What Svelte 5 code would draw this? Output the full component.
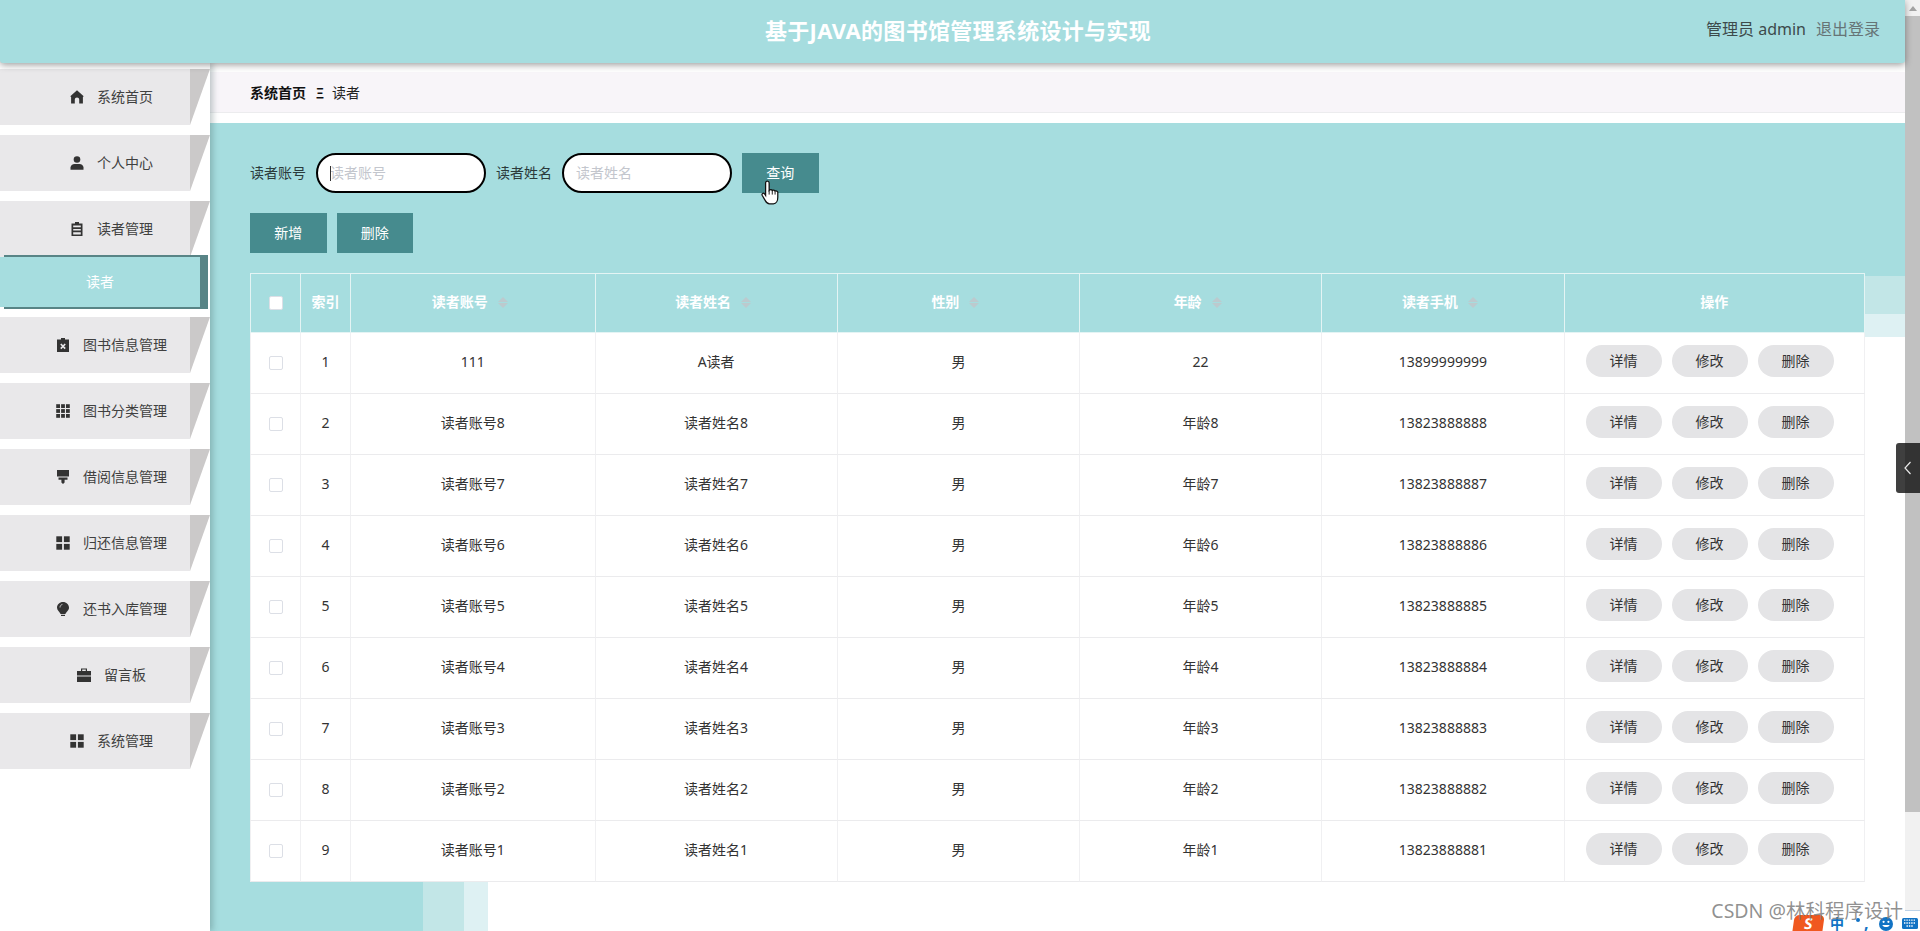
<script>
  const menu = [
    { label: '系统首页', icon: 'home' },
    { label: '个人中心', icon: 'user' },
    { label: '读者管理', icon: 'clip', sub: '读者' },
    { label: '图书信息管理', icon: 'clipx' },
    { label: '图书分类管理', icon: 'grid3' },
    { label: '借阅信息管理', icon: 'brush' },
    { label: '归还信息管理', icon: 'grid2' },
    { label: '还书入库管理', icon: 'bulb' },
    { label: '留言板', icon: 'case' },
    { label: '系统管理', icon: 'grid2' }
  ];
  const cols = ['读者账号', '读者姓名', '性别', '年龄', '读者手机'];
  const rows = [
    ['111', 'A读者', '男', '22', '13899999999'],
    ...[8, 7, 6, 5, 4, 3, 2, 1].map((n) => [
      '读者账号' + n,
      '读者姓名' + n,
      '男',
      '年龄' + n,
      '1382388888' + n
    ])
  ];
  const grid3 = [0, 1, 2].flatMap((y) => [0, 1, 2].map((x) => [x * 4.9 + 0.2, y * 4.9 + 0.2]));
</script>

<div class="page">
  <div class="viewport">
    <header class="top">
      <div class="title">基于JAVA的图书馆管理系统设计与实现</div>
      <div class="user"><span class="who">管理员 admin</span><span class="out">退出登录</span></div>
    </header>
    <div class="body">
      <nav class="side">
        {#each menu as m}
          <div class="item" class:open={m.sub}>
            <svg class="ic" viewBox="0 0 14 14" aria-hidden="true">
              {#if m.icon === 'home'}
                <path d="M7 .3 13.7 6.2 12.9 7V13.6H9.2V9.6A2.2 2.2 0 0 0 4.8 9.6V13.6H1.1V7L.3 6.2Z" />
              {:else if m.icon === 'user'}
                <circle cx="7" cy="3.5" r="3.3" />
                <path d="M.5 13.7V11.6C.5 9.6 2.5 8 4.5 8H9.5C11.5 8 13.5 9.6 13.5 11.6V13.7Z" />
              {:else if m.icon === 'clip'}
                <path fill-rule="evenodd" d="M5 0H9V1.5H12.5V14H1.5V1.5H5ZM3.2 3.6V5.3H10.8V3.6ZM3.2 7V8.4H10.8V7ZM3.2 10.2V12.4H10.8V10.2Z" />
              {:else if m.icon === 'clipx'}
                <path d="M5 0H9V1.5H13V14H1V1.5H5Z" />
                <path class="cut" d="M4.8 6 9.2 10.6M9.2 6 4.8 10.6" />
              {:else if m.icon === 'grid3'}
                {#each grid3 as g}
                  <rect x={g[0]} y={g[1]} width="3.8" height="3.8" />
                {/each}
              {:else if m.icon === 'grid2'}
                <rect x=".3" y=".3" width="5.8" height="5.8" />
                <rect x="7.9" y=".3" width="5.8" height="5.8" />
                <rect x=".3" y="7.9" width="5.8" height="5.8" />
                <rect x="7.9" y="7.9" width="5.8" height="5.8" />
              {:else if m.icon === 'brush'}
                <path d="M1 0H13V6.6H1ZM2.5 7.6H11.5V9.8H8.6V12.6L7 14 5.4 12.6V9.8H2.5Z" />
              {:else if m.icon === 'bulb'}
                <path d="M7 0C3.6 0 1 2.5 1 5.7 1 8.4 3.7 9.6 4.6 12H9.4C10.3 9.6 13 8.4 13 5.7 13 2.5 10.4 0 7 0Z" />
                <path d="M5 12.8H9V14H5Z" />
                <path class="cut thin" d="M4 5.5C4 3.8 5.2 2.6 6.4 2.4" />
              {:else if m.icon === 'case'}
                <path d="M4 3V.4H10V3H8.8V1.6H5.2V3ZM0 3H14V7.6H0ZM0 8.6H14V14H0Z" />
              {/if}
            </svg>
            <span>{m.label}</span>
          </div>
          {#if m.sub}
            <div class="sub">{m.sub}</div>
          {/if}
        {/each}
      </nav>
      <main class="main">
        <div class="crumb">
          <b>系统首页</b><i class="sep">三</i><span>读者</span>
        </div>
        <section class="content">
          <div class="search">
            <label>读者账号<span class="field"><input placeholder="读者账号" /><span class="caret"></span></span></label>
            <label>读者姓名<input placeholder="读者姓名" /></label>
            <button class="act query">
              查询
              <svg class="hand" viewBox="0 0 18 24" aria-hidden="true">
                <path d="M6 1C7 1 7.7 1.8 7.7 2.8V9.9C8.3 9.2 10.2 9 10.7 10.1 11.3 9.5 13 9.6 13.4 10.6 14.2 10.2 15.9 10.6 16 11.8V16.5C16 19.5 14.6 22.8 11.8 22.8H8C6 22.8 5 21.8 4 19.8L1 14.6C.3 13.2 2.2 12 3.2 13.2L4.3 14.8V2.8C4.3 1.8 5 1 6 1Z" />
                <path class="fingers" d="M7.7 10V14M10.7 10.2V14M13.4 10.7V14" />
              </svg>
            </button>
          </div>
          <div class="actions">
            <button class="act">新增</button>
            <button class="act">删除</button>
          </div>
          <table>
            <colgroup>
              <col class="c-first" /><col class="c-index" /><col class="c-account" />
              <col /><col /><col /><col />
              <col class="c-ops" />
            </colgroup>
            <thead>
              <tr>
                <th><span class="check on"></span></th>
                <th>索引</th>
                {#each cols as c}
                  <th><span class="sortable">{c}<span class="sort"><em class="up"></em><em class="down"></em></span></span></th>
                {/each}
                <th>操作</th>
              </tr>
            </thead>
            <tbody>
              {#each rows as r, i}
                <tr>
                  <td><span class="check"></span></td>
                  <td>{i + 1}</td>
                  {#each r as v}
                    <td>{v}</td>
                  {/each}
                  <td>
                    <div class="btns">
                      <button>详情</button><button>修改</button><button>删除</button>
                    </div>
                  </td>
                </tr>
              {/each}
            </tbody>
          </table>
        </section>
      </main>
    </div>
  </div>
  <aside class="scroll">
    <div class="arrow"><span></span></div>
    <div class="thumb"></div>
    <div class="track"></div>
  </aside>

  <div class="tab">
    <svg viewBox="0 0 8 14" aria-hidden="true"><path d="M6.5 1 1 7l5.5 6" /></svg>
  </div>

  <div class="ime">
    <div class="logo"><span>S</span></div>
    <b class="zh">中</b>
    <i class="dot"></i>
    <b class="comma">,</b>
    <svg class="smile" viewBox="0 0 14 14" aria-hidden="true">
      <circle cx="7" cy="7" r="7" />
      <circle class="eye" cx="4.6" cy="4.8" r="1.1" />
      <circle class="eye" cx="9.4" cy="4.8" r="1.1" />
      <path class="mouth" d="M3.4 8C4 10.8 10 10.8 10.6 8Z" />
    </svg>
    <svg class="kbd" viewBox="0 0 16 11" aria-hidden="true">
      <rect width="16" height="11" rx="1.5" />
      <path class="keys" d="M2 2.2H14M2 5H14M4.5 8H11.5" stroke-dasharray="1.4 1" />
    </svg>
  </div>
  <div class="mark">CSDN @林科程序设计</div>
</div>

<style>
  :global(body) {
    margin: 0;
    background: #fff;
    overflow: hidden;
    font-family: "Noto Sans", "Noto Sans CJK SC", sans-serif;
  }
  .page {
    --teal: #a6dddf;
    --deep: #468b8e;
    position: relative;
    display: flex;
    width: 1920px;
    height: 931px;
    overflow: hidden;
    color: #333;
    font-size: 14px;
    line-height: 20px;
  }
  .viewport {
    display: flex;
    flex-direction: column;
    width: 1905px;
    height: 100%;
  }

  .top {
    position: relative;
    z-index: 3;
    flex: none;
    display: grid;
    grid-template-columns: 1fr auto 1fr;
    align-items: center;
    height: 63px;
    padding: 0 25px 0 36px;
    background: var(--teal);
    border-radius: 0 0 3px 3px;
    box-shadow: 0 2px 7px rgba(0, 0, 0, 0.38);
  }
  .title {
    grid-column: 2;
    margin-bottom: 4px;
    color: #fff;
    font-size: 22px;
    font-weight: 700;
    line-height: 30px;
    letter-spacing: 0.3px;
  }
  .user {
    grid-column: 3;
    justify-self: end;
    display: flex;
    gap: 10px;
    margin-bottom: 5px;
    font-size: 16px;
    line-height: 24px;
  }
  .who { color: #3d4a4b; }
  .out { color: #667476; }

  .body {
    flex: 1;
    display: flex;
    min-height: 0;
  }
  .side {
    position: relative;
    z-index: 2;
    flex: none;
    width: 210px;
    padding-top: 6px;
    box-sizing: border-box;
    background: #fff;
    box-shadow: 3px 0 6px rgba(60, 90, 90, 0.3);
  }
  .item {
    position: relative;
    display: flex;
    align-items: center;
    justify-content: center;
    gap: 13px;
    box-sizing: border-box;
    width: 190px;
    height: 56px;
    margin-bottom: 10px;
    padding-left: 33px;
    background: #e9e8ea;
    color: #404040;
  }
  .item::after {
    content: "";
    position: absolute;
    left: 100%;
    top: 0;
    width: 20px;
    height: 56px;
    background: #cbc9c9;
    clip-path: polygon(0 0, 100% 0, 0 100%);
  }
  .item.open { margin-bottom: 0; }
  .ic {
    flex: none;
    width: 14px;
    height: 14px;
    fill: #333;
  }
  .cut {
    fill: none;
    stroke: #e9e8ea;
    stroke-width: 1.6;
  }
  .cut.thin { stroke-width: 0.8; }
  .sub {
    position: relative;
    width: 200px;
    height: 50px;
    margin-bottom: 10px;
    background: var(--teal);
    box-shadow: 6px 0 0 2px #588486;
    color: #fff;
    text-align: center;
    line-height: 50px;
  }

  .main {
    flex: 1;
    min-width: 0;
    display: flex;
    flex-direction: column;
  }
  .crumb {
    flex: none;
    display: flex;
    align-items: center;
    box-sizing: border-box;
    height: 41px;
    margin: 9px 0 10px;
    padding: 2px 0 0 40px;
    background: #f8f5f9;
    border-bottom: 1px solid #ececee;
    color: #222;
  }
  .crumb b { font-weight: 700; color: #111; }
  .sep {
    width: 10px;
    margin: 0 7px 0 9px;
    font-style: normal;
    font-size: 10px;
    font-weight: 700;
    color: #111;
    transform: scale(0.8, 1.2);
  }
  .content {
    flex: 1;
    box-sizing: border-box;
    padding: 30px 40px 0;
    background-color: #fff;
    background-image:
      linear-gradient(var(--teal), var(--teal)),
      linear-gradient(var(--teal), var(--teal)),
      linear-gradient(#c2e6e7, #c2e6e7),
      linear-gradient(#c2e6e7, #c2e6e7),
      linear-gradient(#def1f3, #def1f3),
      linear-gradient(#def1f3, #def1f3);
    background-repeat: no-repeat;
    background-size:
      100% 153px,
      213px 100%,
      254px 100%,
      100% 191px,
      278px 100%,
      100% 214px;
  }
  .search {
    display: flex;
    gap: 10px;
    height: 40px;
    margin-bottom: 20px;
  }
  label {
    display: flex;
    align-items: center;
    gap: 10px;
    color: #2b3a3b;
  }
  .field {
    position: relative;
    display: block;
  }
  input {
    display: block;
    box-sizing: border-box;
    width: 170px;
    height: 40px;
    padding: 0 12px 2px;
    border: 2px solid #000;
    border-radius: 20px;
    background: #fff;
    outline: none;
    font: inherit;
    color: #333;
  }
  input::placeholder { color: #c3c6cd; }
  .caret {
    position: absolute;
    left: 14px;
    top: 13px;
    width: 1px;
    height: 15px;
    background: #333;
  }
  .act {
    position: relative;
    width: 76.5px;
    height: 40px;
    padding: 0;
    border: 0;
    background: var(--deep);
    color: #fff;
    font: inherit;
  }
  .hand {
    position: absolute;
    left: 19px;
    top: 27px;
    width: 19px;
    height: 25px;
    fill: #fff;
    stroke: #111;
    stroke-width: 1.2;
  }
  .fingers { fill: none; stroke-width: 0.9; }
  .actions {
    display: flex;
    gap: 10px;
    height: 40px;
    margin-bottom: 20px;
  }

  table {
    width: 1615px;
    table-layout: fixed;
    border-spacing: 0;
    border-collapse: separate;
    background: #fff;
  }
  .c-first { width: 51px; }
  .c-index { width: 50px; }
  .c-account { width: 244.5px; }
  .c-ops { width: 300.5px; }
  th, td {
    box-sizing: border-box;
    padding: 0 0 2px;
    text-align: center;
  }
  th {
    height: 60px;
    background: var(--teal);
    border-top: 1px solid #e4f4f4;
    border-right: 1px solid #e4f4f4;
    border-bottom: 1px solid #e4f4f4;
    color: #fff;
    font-weight: 700;
  }
  th:first-child { border-left: 1px solid #e4f4f4; }
  td {
    height: 61px;
    border-right: 1px solid #f0f0f2;
    border-bottom: 1px solid #ebebed;
    color: #333;
  }
  td:first-child { border-left: 1px solid #f0f0f2; }
  .sortable {
    display: inline-flex;
    align-items: center;
    gap: 10px;
    padding-right: 6px;
    margin-top: -2px;
  }
  .sort {
    display: flex;
    flex-direction: column;
    gap: 1px;
  }
  .sort em {
    display: block;
    width: 0;
    height: 0;
    border-left: 5px solid transparent;
    border-right: 5px solid transparent;
  }
  .sort .up { border-bottom: 5px solid #bccace; }
  .sort .down { border-top: 5px solid #bccace; }
  .check {
    display: inline-block;
    box-sizing: border-box;
    width: 14px;
    height: 14px;
    border: 1px solid #dcdfe6;
    border-radius: 2px;
    background: #fff;
    vertical-align: middle;
  }
  .btns {
    display: flex;
    gap: 10px;
    padding-left: 21px;
    margin-top: -3px;
  }
  .btns button {
    width: 76px;
    height: 32px;
    padding: 0;
    border: 0;
    border-radius: 16px;
    background: #e4e4e6;
    color: #333;
    font: inherit;
  }

  .scroll {
    flex: none;
    display: flex;
    flex-direction: column;
    width: 15px;
    height: 100%;
    background: #fff;
  }
  .arrow {
    flex: none;
    height: 16px;
    display: flex;
    align-items: center;
    justify-content: center;
    background: #f1f1f1;
  }
  .arrow span {
    width: 0;
    height: 0;
    border-left: 4px solid transparent;
    border-right: 4px solid transparent;
    border-bottom: 5px solid #a3a3a3;
  }
  .thumb {
    flex: none;
    height: 796px;
    background: #c1c1c1;
  }
  .track {
    flex: none;
    height: 98px;
    background: #f1f1f1;
    border-bottom: 1px solid #bcd2e8;
  }

  .tab {
    position: absolute;
    left: 1896px;
    top: 443px;
    display: flex;
    align-items: center;
    justify-content: center;
    width: 24px;
    height: 50px;
    border-radius: 3px 0 0 3px;
    background: linear-gradient(90deg, #3f3f3f 0, #3f3f3f 37%, #333 37%);
  }
  .tab svg {
    width: 8px;
    height: 14px;
    fill: none;
    stroke: #e8e8e8;
    stroke-width: 1.2;
  }

  .ime {
    position: absolute;
    inset: 0;
    pointer-events: none;
  }
  .logo {
    position: absolute;
    left: 1793px;
    top: 915px;
    display: flex;
    align-items: flex-start;
    justify-content: center;
    width: 30px;
    height: 24px;
    border-radius: 5px;
    background: #f0581f;
    transform: skewX(-8deg);
    color: #fff;
    font-size: 15px;
    font-weight: 700;
    line-height: 16px;
  }
  .zh {
    position: absolute;
    left: 1830px;
    top: 917px;
    color: #1273c4;
    font-size: 14px;
    line-height: 14px;
  }
  .dot {
    position: absolute;
    left: 1856px;
    top: 918px;
    width: 4px;
    height: 4px;
    border-radius: 50%;
    background: #1273c4;
  }
  .comma {
    position: absolute;
    left: 1864px;
    top: 915px;
    color: #1273c4;
    font-size: 16px;
    line-height: 16px;
  }
  .smile {
    position: absolute;
    left: 1879px;
    top: 917px;
    width: 14px;
    height: 14px;
    fill: #1273c4;
  }
  .eye, .mouth { fill: #fff; }
  .kbd {
    position: absolute;
    left: 1902px;
    top: 918px;
    width: 16px;
    height: 11px;
    fill: #1273c4;
  }
  .keys {
    fill: none;
    stroke: #fff;
    stroke-width: 1.3;
  }
  .mark {
    position: absolute;
    right: 17px;
    top: 898px;
    color: rgba(120, 120, 120, 0.82);
    font-size: 19.5px;
    line-height: 26px;
    white-space: nowrap;
  }
</style>
